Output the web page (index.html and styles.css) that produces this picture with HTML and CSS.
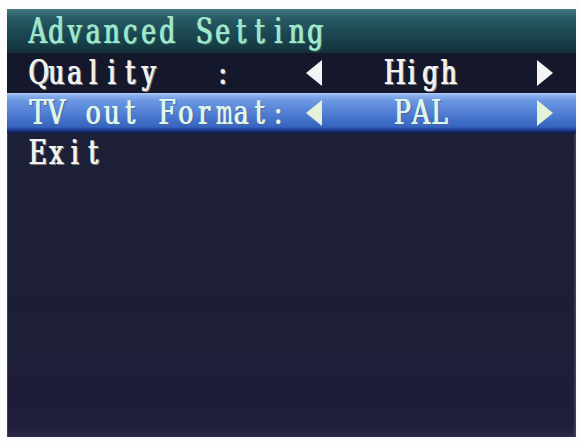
FILE: index.html
```html
<!DOCTYPE html>
<html>
<head>
<meta charset="utf-8">
<link rel="stylesheet" href="styles.css">
</head>
<body>
<div class="screen">
  <div class="title"><span class="word"><span class="c">A</span><span class="c">d</span><span class="c">v</span><span class="c">a</span><span class="c">n</span><span class="c">c</span><span class="c">e</span><span class="c">d</span><span class="c"> </span><span class="c">S</span><span class="c">e</span><span class="c">t</span><span class="c">t</span><span class="c">i</span><span class="c">n</span><span class="c">g</span></span></div>
  <div class="row dark">
    <span class="word"><span class="c">Q</span><span class="c">u</span><span class="c">a</span><span class="c">l</span><span class="c">i</span><span class="c">t</span><span class="c">y</span><span class="c"> </span><span class="c"> </span><span class="c"> </span><span class="c">:</span></span>
    <svg class="arrow" viewBox="0 0 18 28"><polygon points="1,14 17,1 17,27"/></svg>
    <span class="value"><span class="word"><span class="c">H</span><span class="c">i</span><span class="c">g</span><span class="c">h</span></span></span>
    <span></span>
    <svg class="arrow" viewBox="0 0 18 28"><polygon points="17,14 1,1 1,27"/></svg>
  </div>
  <div class="row sel">
    <span class="word"><span class="c">T</span><span class="c">V</span><span class="c"> </span><span class="c">o</span><span class="c">u</span><span class="c">t</span><span class="c"> </span><span class="c">F</span><span class="c">o</span><span class="c">r</span><span class="c w">m</span><span class="c">a</span><span class="c">t</span><span class="c">:</span></span>
    <svg class="arrow" viewBox="0 0 18 28"><polygon points="1,14 17,1 17,27"/></svg>
    <span class="value"><span class="word"><span class="c">P</span><span class="c">A</span><span class="c">L</span></span></span>
    <span></span>
    <svg class="arrow" viewBox="0 0 18 28"><polygon points="17,14 1,1 1,27"/></svg>
  </div>
  <div class="row plain">
    <span class="word"><span class="c">E</span><span class="c">x</span><span class="c">i</span><span class="c">t</span></span>
  </div>
</div>
</body>
</html>
```

FILE: styles.css
```css
html, body {
  margin: 0;
  padding: 0;
  background: #fdfdfd;
}
.screen {
  margin: 9px 0 0 7px;
  width: 569px;
  height: 428px;
  background: linear-gradient(180deg, #1d2137 0%, #1c1f36 60%, #1e1d3a 97%, #2a2a48 100%);
  box-shadow: inset 1px 0 0 #3a3d55, inset -2px 0 0 #3a3d55;
  overflow: hidden;
  font-family: "DejaVu Serif", "Liberation Serif", serif;
  font-stretch: normal;
  font-weight: normal;
  font-size: 25px;
  line-height: 1;
  color: #f2f2ee;
}
.word {
  display: flex;
  line-height: 24px;
  transform: scaleY(1.34);
  text-shadow: 1px 0 0 #f2f2ee, 1px 1px 0 #7a7a80, 2px 1px 0 #7a7a80;
}
.c {
  display: inline-block;
  width: 18.5px;
  text-align: center;
  white-space: pre;
}
.c.w {
  transform: scaleX(0.7);
}
.title {
  height: 44px;
  display: flex;
  align-items: center;
  padding-left: 21px;
  background: linear-gradient(180deg, #46787f 0%, #2a5c66 18%, #1d4a55 50%, #163a44 85%, #13303a 100%);
}
.title .word {
  color: #9fe6cc;
  transform: scaleY(1.44);
  text-shadow: 1px 0 0 #9fe6cc, 1px 1px 0 #2f6a66, 2px 1px 0 #2f6a66;
}
.row {
  height: 40px;
  display: grid;
  grid-template-columns: 277px 18px 195px 18px 18px;
  align-items: center;
  padding-left: 21px;
}
.dark {
  background: #15182a;
}
.sel {
  background: linear-gradient(180deg, #b4cdf2 0%, #8bb0ec 6%, #6a96e0 20%, #4d7bd2 55%, #3563be 85%, #1e3a90 93%, #0d1550 100%);
}
.sel .word {
  color: #e0f6ea;
  text-shadow: 1px 0 0 #e0f6ea, 1px 1px 0 #4a68a0, 2px 1px 0 #4a68a0;
}
.sel .arrow polygon {
  fill: #e4f2d8;
}
.plain {
  background: transparent;
}
.value {
  display: flex;
  justify-content: center;
}
.arrow {
  width: 18px;
  height: 28px;
  display: block;
}
.arrow polygon {
  fill: #f4f4f4;
}
```
